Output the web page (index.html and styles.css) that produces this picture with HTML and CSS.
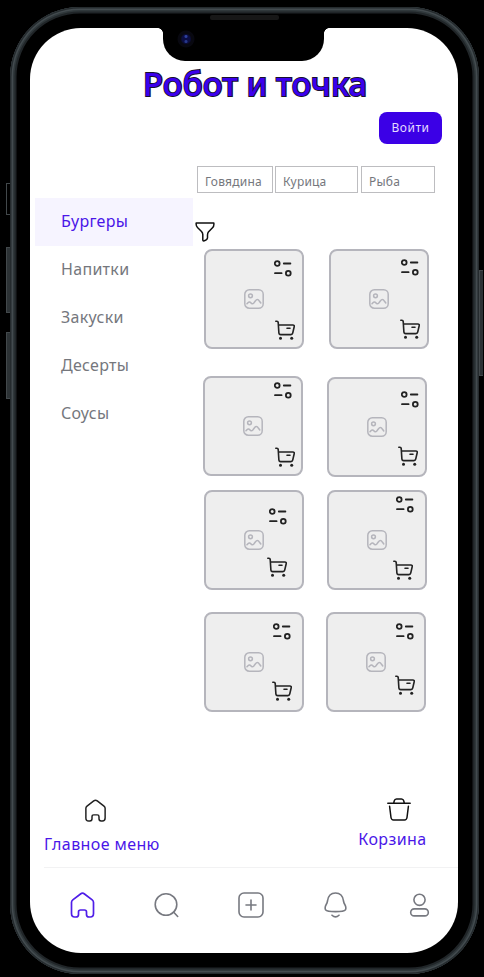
FILE: index.html
```html
<!DOCTYPE html>
<html lang="ru">
<head>
<meta charset="utf-8">
<title>Робот и точка</title>
<link rel="stylesheet" href="styles.css">
</head>
<body>
<svg class="defs" width="0" height="0">
  <symbol id="options" viewBox="0 0 18 17"><g fill="none" stroke="#222" stroke-width="1.8" stroke-linecap="round"><circle cx="3.2" cy="3.5" r="2.4"/><path d="M9.8 3.5h6.6M1 13.2h6.6"/><circle cx="14.3" cy="13.2" r="2.4"/></g></symbol>
  <symbol id="cart" viewBox="0 0 20 20"><g fill="none" stroke="#222" stroke-width="1.6" stroke-linecap="round" stroke-linejoin="round"><path d="M.8 1.200h1.100q1.200 0 1.300 1.200l.7 10.700q.2 1.500 1.700 1.500h10.300q1.500 0 1.800-1.400l1.500-6.500q.4-1.700-1.300-1.700H3.600M12 8.200h3"/></g><circle cx="5.500" cy="18.300" r="1.500" fill="#222"/><circle cx="16.700" cy="18.300" r="1.500" fill="#222"/></symbol>
  <symbol id="picture" viewBox="0 0 20 20"><g fill="none" stroke="#b5b5bc" stroke-width="1.500" stroke-linecap="round" stroke-linejoin="round"><rect x=".8" y=".8" width="18.400" height="18.400" rx="4.500"/><circle cx="6.500" cy="6.800" r="1.900"/><path d="M3 14.800q2.300-3 3.800-1t3 .2l1.500-2q2.200-3 4 0l1.500 2"/></g></symbol>
  <symbol id="home" viewBox="0 0 24 26"><path d="M1 10.500Q1 8.900 2.300 7.900L10 2Q12 .4 14 2l7.700 5.900Q23 8.900 23 10.500V21.500Q23 25 19.800 25H18.500Q16 25 16 22.500V20Q16 18 14 18H10Q8 18 8 20v2.500Q8 25 5.500 25H4.200Q1 25 1 21.500Z" fill="none" stroke="currentColor" stroke-width="1.700" stroke-linejoin="round"/></symbol>
</svg>
<div class="phone">
  <i class="key mute"></i><i class="key vol-up"></i><i class="key vol-down"></i><i class="key power"></i>
  <i class="speaker"></i>
  <div class="screen">
    <div class="notch"><i class="camera"></i></div>
    <h1>Робот и точка</h1>
    <button class="login">Войти</button>
    <div class="content">
      <ul class="categories">
        <li class="active">Бургеры</li><li>Напитки</li><li>Закуски</li><li>Десерты</li><li>Соусы</li>
      </ul>
      <main>
        <div class="tags"><span class="beef">Говядина</span><span class="chicken">Курица</span><span class="fish">Рыба</span></div>
        <svg class="filter" viewBox="0 0 20 20"><path d="M1.200.9H18.800Q19.300 4 17.500 5.800L13.400 10Q12.600 11 12.500 13V16Q12.200 18 8.700 19Q7.800 19 7.800 18V12.500Q7.700 10.800 6.500 9.500L2.500 5.500Q.8 3.700 1.200.9Z" fill="none" stroke="#111" stroke-width="1.500" stroke-linejoin="round"/></svg>
        <div class="products">
          <div class="row r1">
            <div class="card c1"><svg class="pic"><use href="#picture"/></svg><svg class="opt"><use href="#options"/></svg><svg class="cart"><use href="#cart"/></svg></div>
            <div class="card c2"><svg class="pic"><use href="#picture"/></svg><svg class="opt"><use href="#options"/></svg><svg class="cart"><use href="#cart"/></svg></div>
          </div>
          <div class="row r2">
            <div class="card c3"><svg class="pic"><use href="#picture"/></svg><svg class="opt"><use href="#options"/></svg><svg class="cart"><use href="#cart"/></svg></div>
            <div class="card c4"><svg class="pic"><use href="#picture"/></svg><svg class="opt"><use href="#options"/></svg><svg class="cart"><use href="#cart"/></svg></div>
          </div>
          <div class="row r3">
            <div class="card c5"><svg class="pic"><use href="#picture"/></svg><svg class="opt"><use href="#options"/></svg><svg class="cart"><use href="#cart"/></svg></div>
            <div class="card c6"><svg class="pic"><use href="#picture"/></svg><svg class="opt"><use href="#options"/></svg><svg class="cart"><use href="#cart"/></svg></div>
          </div>
          <div class="row r4">
            <div class="card c7"><svg class="pic"><use href="#picture"/></svg><svg class="opt"><use href="#options"/></svg><svg class="cart"><use href="#cart"/></svg></div>
            <div class="card c8"><svg class="pic"><use href="#picture"/></svg><svg class="opt"><use href="#options"/></svg><svg class="cart"><use href="#cart"/></svg></div>
          </div>
        </div>
      </main>
    </div>
    <div class="links">
      <a class="link menu"><svg width="21" height="23"><use href="#home"/></svg><span>Главное меню</span></a>
      <a class="link basket"><svg width="24" height="23" viewBox="0 0 24 23" fill="none" stroke="#111" stroke-width="1.500" stroke-linecap="round" stroke-linejoin="round"><path d="M.8 5.300H23.200M6.800 4.700 7.200 3Q7.700 1 9.500 1H14.500Q16.300 1 16.800 3L17.200 4.700M2.600 8.300 4 19.500Q4.400 22 6.500 22H17.500Q19.600 22 20 19.500L21.400 8.300"/></svg><span>Корзина</span></a>
    </div>
    <nav>
      <svg class="on" width="25" height="26"><use href="#home"/></svg>
      <svg width="25" height="26" viewBox="0 0 25 26"><circle cx="12" cy="12.500" r="10.800"/><path d="m19.500 20 4.200 4.500"/></svg>
      <svg width="26" height="26" viewBox="0 0 26 26"><rect x="1" y="1" width="24" height="24" rx="5"/><path d="M13 8v10M8 13h10"/></svg>
      <svg width="25" height="26" viewBox="0 0 25 26"><path d="M4.500 9Q5.500 1 12.500 1T20.500 9Q20.800 10.800 21.800 12.500 23.500 15.500 22.500 17.700 21 19.600 12.500 19.600T2.500 17.700Q1.500 15.500 3.200 12.500 4.200 10.800 4.500 9ZM9 23.200q3.500 3.400 7 0"/></svg>
      <svg width="25" height="26" viewBox="0 0 25 26"><circle cx="12.500" cy="7.800" r="5.600"/><rect x="3.700" y="16.900" width="17.600" height="7" rx="3.500"/></svg>
    </nav>
  </div>
</div>
</body>
</html>
```

FILE: styles.css
```css
* { box-sizing: border-box; }
body {
  margin: 0;
  width: 484px;
  height: 977px;
  padding: 7px 0 0 9.5px;
  background: #000;
  overflow: hidden;
  font-family: "Noto Sans", sans-serif;
}
.defs { position: absolute; }
svg { display: block; flex: none; }
.phone {
  position: relative;
  width: 469px;
  height: 967px;
  padding: 20.5px 0 0 20.5px;
  border-radius: 70px;
  background: #000;
  box-shadow: inset 0 0 0 1.5px #252b2e, inset 0 0 0 3px #434b4f, inset 0 0 0 4.5px #30383b, inset 0 0 0 6.500px #202528;
}
.key {
  position: absolute;
  width: 4px;
  background: #2c3235;
  border: 1px solid #42484b;
  border-right: 0;
}
.mute { left: -4px; top: 176px; height: 32px; background: #000; }
.vol-up { left: -4px; top: 240px; height: 66px; }
.vol-down { left: -4px; top: 325px; height: 67px; }
.power { right: -4px; top: 263px; height: 106px; }
.speaker {
  position: absolute;
  left: 200px;
  top: 8px;
  width: 69px;
  height: 5px;
  border-radius: 2px;
  background: #171717;
}
.screen {
  width: 427.5px;
  height: 925.5px;
  border-radius: 51px;
  background: #fff;
  overflow: hidden;
  display: flex;
  flex-direction: column;
}
.notch {
  position: relative;
  width: 161px;
  height: 33.500px;
  margin: 0 0 0 133px;
  flex: none;
  background: #000;
  border-radius: 0 0 22px 22px;
}
.notch::before, .notch::after {
  content: "";
  position: absolute;
  top: 0;
  width: 5px;
  height: 5px;
}
.notch::before { left: -5px; background: radial-gradient(circle at 0 100%, transparent 4.500px, #000 5px); }
.notch::after { right: -5px; background: radial-gradient(circle at 100% 100%, transparent 4.500px, #000 5px); }
.camera {
  position: absolute;
  left: 14px;
  top: 2px;
  width: 18px;
  height: 18px;
  border-radius: 50%;
  background: radial-gradient(circle at 50% 36%, #2d409e 0 1px, transparent 2px), radial-gradient(circle at 50% 64%, #27388c 0 1px, transparent 2px), radial-gradient(circle, #0b0d43 0 4px, #080810 5.500px 8px, #000 9px);
}
h1 {
  margin: 0 0 0 113px;
  height: 50.500px;
  flex: none;
  white-space: nowrap;
  font-size: 33px;
  line-height: 46px;
  font-weight: 500;
  color: #3b00ed;
  -webkit-text-stroke: 2px #17102f;
  paint-order: stroke fill;
}
.login {
  width: 63px;
  height: 32px;
  flex: none;
  margin-left: 349px;
  padding: 0;
  border: 0;
  border-radius: 8px;
  background: #3b00e6;
  color: #e4dcff;
  font: 12px/31px "Noto Sans", sans-serif;
  letter-spacing: .5px;
}
.content { display: flex; height: 624px; flex: none; padding: 22px 0 0 5px; }
.categories {
  list-style: none;
  width: 158px;
  margin: 32.500px 0 0;
  padding: 0;
  color: #75777d;
  font-size: 16px;
  letter-spacing: .3px;
}
.categories li { height: 48px; line-height: 46px; padding-left: 26px; }
.categories .active { background: #f6f4ff; color: #4a16e8; }
main { flex: 1; padding-left: 1px; }
.tags { display: flex; margin-left: 3px; height: 27px; }
.tags span {
  border: 1px solid #bdbdc0;
  padding-left: 7px;
  font-size: 12px;
  line-height: 30px;
  letter-spacing: .2px;
  color: #75777d;
}
.tags .beef { width: 76px; }
.tags .chicken { width: 83px; margin-left: 2px; }
.tags .fish { width: 74px; margin-left: 3px; }
.filter { width: 20px; height: 20px; margin: 29px 0 0 0.500px; }
.products { padding: 7.500px 0 0 10px; }
.row { display: flex; align-items: flex-start; height: 127px; }
.r2 { height: 114px; }
.r3 { height: 122px; }
.card {
  position: relative;
  display: grid;
  place-items: center;
  width: 100px;
  height: 100px;
  flex: none;
  border: 2px solid #b5b5bc;
  border-radius: 8px;
  background: #eee;
}
.c2 { margin-left: 25px; }
.c3 { margin-left: -1px; }
.c4 { margin: 1px 0 0 24px; }
.c6 { margin-left: 23px; }
.c8 { margin-left: 22px; }
.pic { width: 20px; height: 20px; }
.opt, .cart { position: absolute; left: var(--x); top: var(--y); }
.opt { width: 18px; height: 17px; }
.cart { width: 20px; height: 20px; }
.c1 .opt { --x: 67.500px; --y: 8.500px; }
.c1 .cart { --x: 69px; --y: 69px; }
.c2 .opt { --x: 69.500px; --y: 7.500px; }
.c2 .cart { --x: 69.300px; --y: 68px; }
.c3 .opt { --x: 68.500px; --y: 3.500px; }
.c3 .cart { --x: 70.300px; --y: 69px; }
.c4 .opt { --x: 71.500px; --y: 11.500px; }
.c4 .cart { --x: 69.300px; --y: 67px; }
.c5 .opt { --x: 63.300px; --y: 16px; }
.c5 .cart { --x: 61px; --y: 65px; }
.c6 .opt { --x: 66.500px; --y: 3.500px; }
.c6 .cart { --x: 64px; --y: 68px; }
.c7 .opt { --x: 66.500px; --y: 9px; }
.c7 .cart { --x: 66px; --y: 67px; }
.c8 .opt { --x: 67.500px; --y: 9px; }
.c8 .cart { --x: 67px; --y: 61px; }
.links {
  display: flex;
  justify-content: space-between;
  align-items: flex-start;
  height: 99px;
  flex: none;
  padding: 31px 31px 0 14px;
}
.link {
  display: flex;
  flex-direction: column;
  align-items: center;
  color: #222;
  font-size: 16px;
  line-height: 22px;
  letter-spacing: .4px;
}
.link span { color: #4a16e8; }
.menu svg { margin: 0 0 11px -12px; }
.basket svg { margin: -1px 0 7px 14px; }
nav {
  display: flex;
  justify-content: space-between;
  align-items: flex-start;
  margin-left: 14px;
  padding: 24px 25.500px 0;
  border-top: 1.500px solid #f2f2f3;
}
nav svg { fill: none; stroke: #777980; stroke-width: 1.600; stroke-linecap: round; stroke-linejoin: round; }
nav .on { color: #4f1ee8; stroke: none; }
```
